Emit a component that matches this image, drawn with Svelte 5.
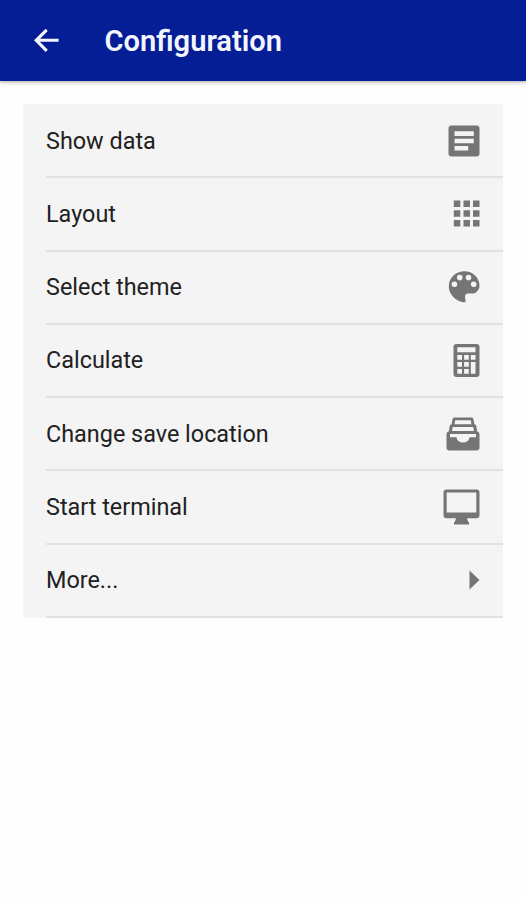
<script>
    // w / h are the drawn size, the path coordinates use the same units
    const items = [
        {
            label: 'Show data',
            w: 32,
            h: 32,
            path: 'M3.5 0.5h25a3 3 0 0 1 3 3v25a3 3 0 0 1-3 3h-25a3 3 0 0 1-3-3v-25a3 3 0 0 1 3-3zM6.5 6.3v4.6h19.3v-4.6zM6.5 13.7v4.6h19.3v-4.6zM6.5 20.9v4.6h13.7v-4.6z',
        },
        {
            label: 'Layout',
            w: 27,
            h: 27,
            path: 'M0.8 0.5h6.5v6.5h-6.5zM10.5 0.5h6.5v6.5h-6.5zM20 0.5h6.5v6.5h-6.5zM0.8 10.2h6.5v6.5h-6.5zM10.5 10.2h6.5v6.5h-6.5zM20 10.2h6.5v6.5h-6.5zM0.8 19.9h6.5v6.5h-6.5zM10.5 19.9h6.5v6.5h-6.5zM20 19.9h6.5v6.5h-6.5z',
        },
        {
            label: 'Select theme',
            w: 32,
            h: 32,
            path: 'M16.3 0.3C7.6 0.3 0.8 7 0.8 15.6C0.8 23.5 7.5 30 15 31.2C16.6 31.5 17.6 31.2 17.6 30C17.6 28.2 15.8 24 18.8 22.8C21.5 21.8 25.8 23.8 28.6 20.8C30.4 18.9 31.5 17 31.5 14.7C31.5 6.5 24.8 0.3 16.3 0.3zM6.4 10.5a2.8 2.8 0 1 0 .01 5.6a2.8 2.8 0 1 0-.01-5.6zM11.7 3.8a2.8 2.8 0 1 0 .01 5.6a2.8 2.8 0 1 0-.01-5.6zM20.5 3.8a2.8 2.8 0 1 0 .01 5.6a2.8 2.8 0 1 0-.01-5.6zM25.7 10.5a2.8 2.8 0 1 0 .01 5.6a2.8 2.8 0 1 0-.01-5.6z',
        },
        {
            label: 'Calculate',
            w: 27,
            h: 33,
            path: 'M3.5 0h20a3 3 0 0 1 3 3v27a3 3 0 0 1-3 3h-20a3 3 0 0 1-3-3v-27a3 3 0 0 1 3-3zM4.3 3.3v5h18.2v-5zM4.3 11v4.7h4.7v-4.7zM11.1 11v4.7h4.7v-4.7zM17.8 11v4.7h4.7v-4.7zM4.3 18v4.7h4.7v-4.7zM11.1 18v4.7h4.7v-4.7zM17.8 18v11.7h4.7v-11.7zM4.3 25v4.7h4.7v-4.7zM11.1 25v4.7h4.7v-4.7z',
        },
        {
            label: 'Change save location',
            w: 34,
            h: 34,
            path: 'M8.5 0.5h17a2 2 0 0 1 2 1.7l.8 5a2 2 0 0 1 2 1.8l.8 5.2a3 3 0 0 1 2.4 3v13.3a3 3 0 0 1-3 3h-27a3 3 0 0 1-3-3v-13.3a3 3 0 0 1 2.4-3l.8-5.2a2 2 0 0 1 2-1.8l.8-5a2 2 0 0 1 2-1.7zM9.2 3.2l-.6 4h16.8l-.6-4zM6.7 10l-.6 4h21.8l-.6-4zM4 16.9v3.4h6.5a6.5 5.2 0 0 0 13 0h6.5v-3.4z',
        },
        {
            label: 'Start terminal',
            w: 37,
            h: 36,
            path: 'M3.5 0.5h30a3 3 0 0 1 3 3v22.8a3 3 0 0 1-3 3h-9.5l1.2 3.6h.8v2.6h-15v-2.6h.8l1.2-3.6h-9.5a3 3 0 0 1-3-3v-22.8a3 3 0 0 1 3-3zM3.7 3.6v19.9h29.6v-19.9z',
        },
        {
            label: 'More...',
            w: 11,
            h: 20,
            path: 'M0.5 0.4L10.5 10L0.5 19.6z',
        },
    ];
</script>

<div class="screen">
    <header>
        <button class="back" aria-label="Back">
            <svg width="26" height="24" viewBox="0 0 26 24">
                <path d="M24.6 12.3H2.2M12.7 1.8L2.2 12.3L12.7 22.8" />
            </svg>
        </button>
        <h1>Configuration</h1>
    </header>

    <ul class="menu">
        {#each items as item}
        <li>
            <span>{item.label}</span>
            <svg class="icon" width={item.w} height={item.h} viewBox="0 0 {item.w} {item.h}">
                <path fill-rule="evenodd" d={item.path} />
            </svg>
        </li>
        {/each}
    </ul>
</div>

<style>
    :global(body) {
        background: #fff;
    }

    .screen {
        min-height: 900px;
        background: #fefefe;
        font-family: Roboto, sans-serif;
    }

    header {
        display: flex;
        align-items: center;
        height: 80.5px;
        box-sizing: border-box;
        padding-left: 34px;
        background: #051e96;
        box-shadow: 0 1px 4px rgba(0, 0, 0, 0.35);
    }

    .back {
        display: flex;
        padding: 0;
        border: none;
        background: none;
        cursor: pointer;
    }

    .back path {
        fill: none;
        stroke: #f4f6ff;
        stroke-width: 3.1;
    }

    h1 {
        margin: 1px 0 0 44.5px;
        color: #f4f6ff;
        font-size: 29.1px;
        font-weight: 600;
        line-height: 34px;
    }

    .menu {
        list-style: none;
        margin: 23.5px 23px 0 22.5px;
        padding: 1px 0 0 23.5px;
        background: #f4f4f4;
    }

    li {
        display: flex;
        align-items: center;
        justify-content: space-between;
        height: 73.25px;
        box-sizing: border-box;
        padding-right: 23px;
        border-bottom: 2px solid #e2e2e2;
        color: #212121;
        font-size: 23.4px;
    }

    .icon {
        fill: #757575;
    }
</style>
